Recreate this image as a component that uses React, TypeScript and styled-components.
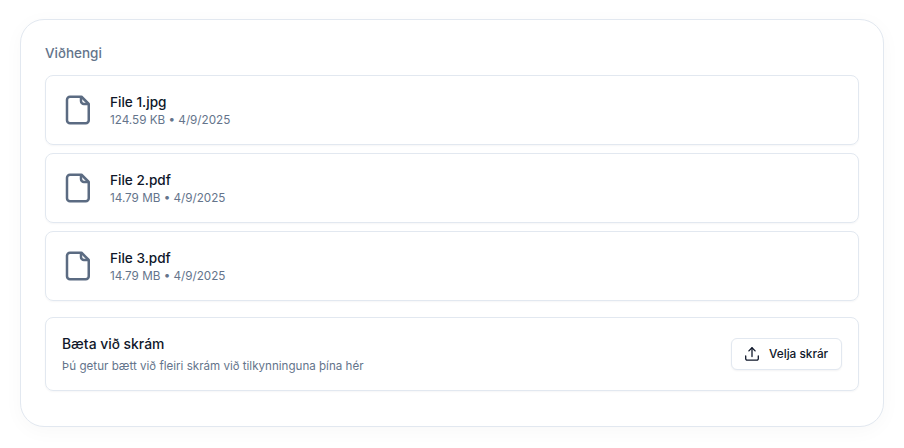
import styled, { createGlobalStyle } from 'styled-components';

const GlobalStyle = createGlobalStyle`
  html, body {
    margin: 0;
    padding: 0;
    background: #ffffff;
    font-family: Inter, "Noto Sans", sans-serif;
  }
  * {
    box-sizing: border-box;
  }
`;

const Page = styled.div`
  width: 904px;
  height: 448px;
  padding: 19px 20px 21px;
`;

const Card = styled.section`
  height: 408px;
  background: #ffffff;
  border: 1px solid #e2e8f0;
  border-radius: 24px;
  padding: 24px;
  box-shadow: 0 4px 20px rgba(15, 23, 42, 0.03);
`;

const Title = styled.h2`
  margin: 0 0 12px;
  height: 19px;
  font-size: 13.5px;
  line-height: 18px;
  font-weight: 500;
  color: #64748b;
`;

const FileList = styled.div`
  display: flex;
  flex-direction: column;
  gap: 8px;
`;

const FileRow = styled.div`
  display: flex;
  align-items: center;
  gap: 16px;
  height: 70px;
  padding: 0 16px;
  border: 1px solid #e2e8f0;
  border-radius: 8px;
  box-shadow: 0 1px 2px rgba(15, 23, 42, 0.04);
`;

const FileInfo = styled.div`
  padding-top: 1px;
`;

const FileName = styled.div`
  font-size: 13.6px;
  line-height: 18px;
  font-weight: 500;
  color: #0f172a;
`;

const FileMeta = styled.div`
  font-size: 11.7px;
  line-height: 18px;
  color: #64748b;
`;

const AddBox = styled.div`
  display: flex;
  align-items: center;
  justify-content: space-between;
  height: 74px;
  margin-top: 16px;
  padding: 0 16px;
  border: 1px solid #e2e8f0;
  border-radius: 8px;
  box-shadow: 0 1px 2px rgba(15, 23, 42, 0.04);
`;

const AddTitle = styled.div`
  font-size: 13.9px;
  line-height: 18px;
  font-weight: 500;
  color: #0f172a;
  margin-bottom: 5px;
`;

const AddHint = styled.div`
  font-size: 11.6px;
  line-height: 16px;
  color: #64748b;
`;

const UploadButton = styled.button`
  display: flex;
  align-items: center;
  gap: 10px;
  width: 111px;
  height: 32px;
  padding: 0 13px;
  background: #ffffff;
  border: 1px solid #e2e8f0;
  border-radius: 6px;
  font-family: inherit;
  font-size: 11.8px;
  font-weight: 500;
  white-space: nowrap;
  color: #0f172a;
  box-shadow: 0 1px 2px rgba(15, 23, 42, 0.05);
`;

const FileIcon = () => (
  <svg width="32" height="32" viewBox="0 0 32 32" fill="none" stroke="#5b6b82" strokeWidth="2.5" strokeLinejoin="round">
    <path d="M8 2.750h11.500l7.250 7.250V26.250a3 3 0 0 1-3 3H8a3 3 0 0 1-3-3V5.750a3 3 0 0 1 3-3z" />
    <path d="M19 2.750V7a3 3 0 0 0 3 3h4.750" />
  </svg>
);

const UploadIcon = () => (
  <svg width="14" height="14" viewBox="0 0 14 14" fill="none" stroke="#0f172a" strokeWidth="1.3" strokeLinecap="round" strokeLinejoin="round" style={{ flexShrink: 0 }}>
    <path d="M7 9.500V0.900" />
    <path d="M3.900 3.900 7 0.800l3.100 3.100" />
    <path d="M0.700 9v2.700a1.500 1.500 0 0 0 1.500 1.500h9.600a1.500 1.500 0 0 0 1.500-1.500V9" />
  </svg>
);

const files = [
  { name: 'File 1.jpg', meta: '124.59 KB • 4/9/2025' },
  { name: 'File 2.pdf', meta: '14.79 MB • 4/9/2025' },
  { name: 'File 3.pdf', meta: '14.79 MB • 4/9/2025' },
];

const App = () => (
  <Page>
    <GlobalStyle />
    <Card>
      <Title>Viðhengi</Title>
      <FileList>
        {files.map(f => (
          <FileRow key={f.name}>
            <FileIcon />
            <FileInfo>
              <FileName>{f.name}</FileName>
              <FileMeta>{f.meta}</FileMeta>
            </FileInfo>
          </FileRow>
        ))}
      </FileList>
      <AddBox>
        <div>
          <AddTitle>Bæta við skrám</AddTitle>
          <AddHint>Þú getur bætt við fleiri skrám við tilkynninguna þína hér</AddHint>
        </div>
        <UploadButton>
          <UploadIcon />
          Velja skrár
        </UploadButton>
      </AddBox>
    </Card>
  </Page>
);

export default App;
